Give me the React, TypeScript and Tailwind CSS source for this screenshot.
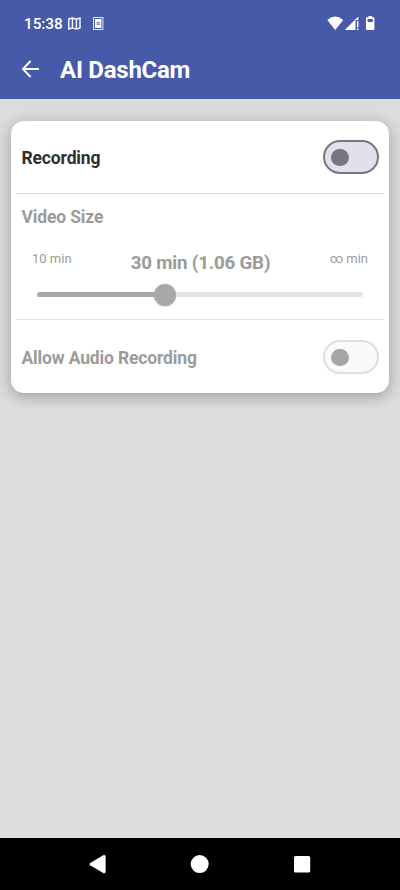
import type { ReactNode } from "react";

export default function App() {
  return (
    <div className="flex h-[890px] w-[400px] flex-col overflow-hidden bg-[#dcdcdc] font-['Roboto',sans-serif]">
      <header className="h-[99px] shrink-0 bg-[#465aa9] text-white">
        <StatusBar />
        <div className="flex h-[46px] items-center pl-[21px]">
          <svg width="19" height="18" viewBox="0 0 19 18" fill="none" stroke="currentColor" strokeWidth="1.9" className="-mt-[2px]">
            <path d="M9.6 1L1.9 9L9.6 17M1.9 9H18" />
          </svg>
          <h1 className="ml-[20px] text-[24px] leading-[28px] font-bold tracking-[-0.25px]">AI DashCam</h1>
        </div>
      </header>

      <main className="flex-1 px-[10.7px] pt-[21.7px]">
        <section className="h-[272.6px] rounded-[13px] bg-white px-[5.3px] shadow-[0_4px_14px_rgba(0,0,0,0.24),0_0_22px_rgba(0,0,0,0.06)]">
          <Row label="Recording" className="h-[72.3px] text-[#303033]">
            <Toggle />
          </Row>
          <div className="h-px bg-[#dddde3]" />

          <div className="h-[125px] px-[5.5px] pt-[13px] text-[#9b9b9b]">
            <h2 className="text-[17.5px] leading-[20px] font-bold tracking-[-0.15px]">Video Size</h2>
            <div className="mt-[24px] flex h-[22px] items-start justify-between pr-[10.5px] pl-[10.5px]">
              <span className="w-[60px] text-[13px] leading-[16px]">10 min</span>
              <span className="mt-[1px] ml-[1px] text-[18.8px] leading-[22px] font-bold tracking-[-0.22px]">30 min (1.06 GB)</span>
              <span className="w-[60px] text-right text-[13px] leading-[16px]">∞ min</span>
            </div>
            <div className="mt-[10px] flex h-[23px] items-center pr-[15.5px] pl-[15.5px]">
              <div className="h-[4.5px] w-[116.7px] rounded-l-full bg-[#a8a8a8]" />
              <div className="mt-px h-[22px] w-[22px] shrink-0 rounded-full bg-[#a8a8aa] shadow-[0_0.5px_1.5px_rgba(0,0,0,0.25)]" />
              <div className="h-[4.5px] flex-1 rounded-r-full bg-[#e3e3e3]" />
            </div>
          </div>

          <div className="h-px bg-[#e3e3eb]" />
          <Row label="Allow Audio Recording" className="h-[74px] text-[#9b9b9b]">
            <Toggle disabled />
          </Row>
        </section>
      </main>

      <nav className="h-[52px] shrink-0 bg-black">
        <svg width="400" height="52" viewBox="0 0 400 52" fill="white">
          <path d="M90.2 24.9L103.2 17.2Q105.6 16.2 105.6 18.5V33.6Q105.6 35.9 103.2 34.9L90.2 27.3Q88.5 26.1 90.2 24.9Z" />
          <circle cx="199.7" cy="26.1" r="9" />
          <rect x="294" y="18.1" width="16.2" height="16.4" rx="1.5" />
        </svg>
      </nav>
    </div>
  );
}

function StatusBar() {
  return (
    <div className="flex h-[47px] items-center pl-[24px]">
      <span className="w-[44px] text-[15.3px] leading-[18px] font-medium tracking-[-0.05px]">15:38</span>
      <svg width="13" height="13" viewBox="0 0 13 13" fill="none" stroke="white" strokeWidth="1.4">
        <path d="M.8 2L4.4 1L8.4 2.2L12 1V11L8.4 12.1L4.4 10.9L.8 12ZM4.4 1V10.9M8.4 2.2V12.1" />
      </svg>
      <svg width="11" height="13" viewBox="0 0 11 13" className="ml-[12px]">
        <rect x=".5" y=".5" width="9.4" height="12" fill="none" stroke="white" strokeOpacity=".85" />
        <rect x="2" y="2" width="6.4" height="9" fill="white" />
        <rect x="3.7" y="4.8" width="3" height="3.2" fill="#465aa9" fillOpacity=".75" />
        <rect x="4.8" y="6" width="1" height="1" fill="white" />
      </svg>
      <svg width="50" height="18" viewBox="0 0 50 18" fill="white" className="ml-[222.5px]">
        <path d="M.3 5Q8.2-1.8 16.2 5L8.2 15Z" />
        <path d="M17.8 15L31.3 1.5V5H28.5V15Z" />
        <path d="M30 6H31.4V12.2H30ZM30 13.4H31.4V15H30Z" />
        <path fillRule="evenodd" d="M41.5 1H45V2.2H46.5Q47.4 2.2 47.4 3.1V14.1Q47.4 15 46.5 15H39.9Q39 15 39 14.1V3.1Q39 2.2 39.9 2.2H41.5ZM40.6 3.9V6.9H45.8V3.9Z" />
      </svg>
    </div>
  );
}

function Row({ label, className, children }: { label: string; className: string; children: ReactNode }) {
  return (
    <div className={`flex items-center justify-between pr-[5.3px] pl-[5.5px] ${className}`}>
      <span className="mt-[2px] text-[17.5px] leading-[20px] font-bold tracking-[-0.15px]">{label}</span>
      {children}
    </div>
  );
}

function Toggle({ disabled }: { disabled?: boolean }) {
  return (
    <div
      role="switch"
      aria-checked={false}
      className={`mt-px flex h-[34px] w-[56px] items-center rounded-full border-2 pl-[6.5px] ${
        disabled ? "border-[#dfdfe1] bg-[#fafafc]" : "border-[#787680] bg-[#e2e0eb]"
      }`}
    >
      <div className={`h-[17.4px] w-[17.4px] rounded-full ${disabled ? "bg-[#a6a6a8]" : "bg-[#777580]"}`} />
    </div>
  );
}
